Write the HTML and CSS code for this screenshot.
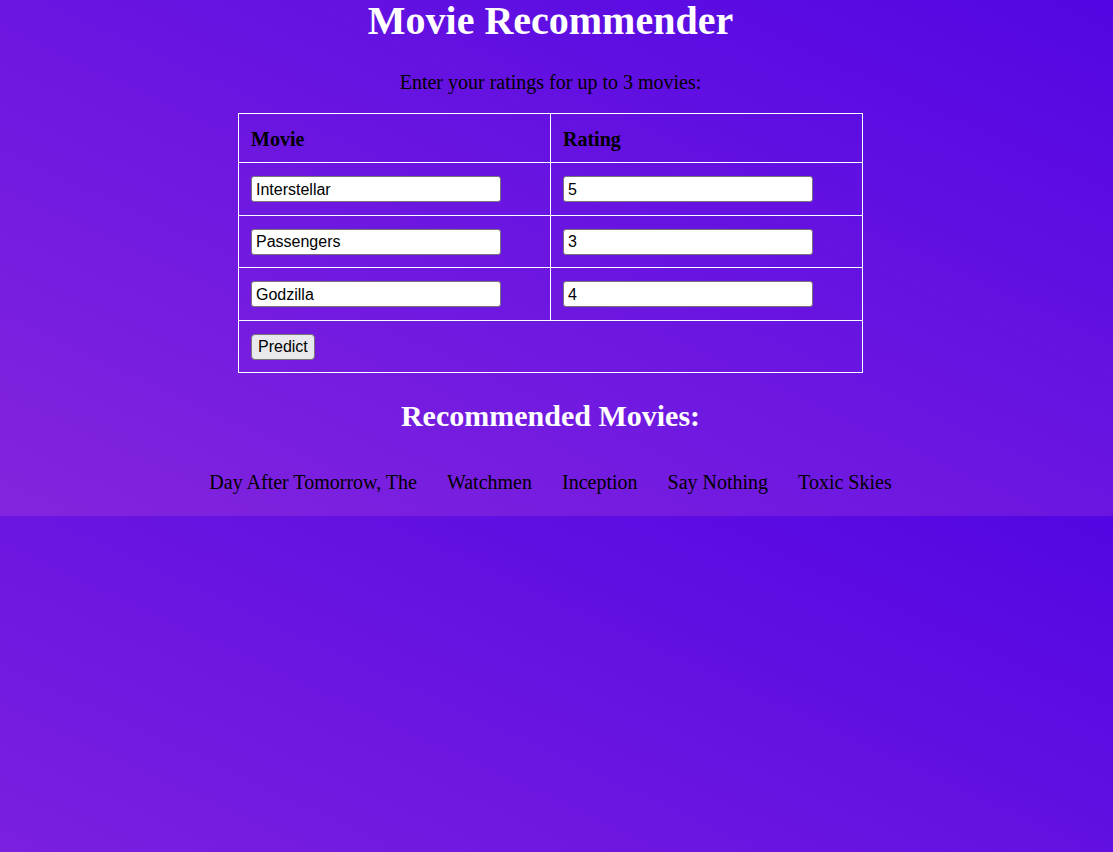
FILE: index.html
```html
<!DOCTYPE html>
<html>
<head>
<meta charset="utf-8">
<title>Movie Recommender</title>
<link rel="stylesheet" href="styles.css">
</head>
<body>
<div class="page">
  <h1 class="title">Movie Recommender</h1>
  <p class="intro">Enter your ratings for up to 3 movies:</p>
  <form class="rating-form">
    <table class="rating-table">
      <tr>
        <th>Movie</th>
        <th>Rating</th>
      </tr>
      <tr>
        <td><input class="field" type="text" value="Interstellar"></td>
        <td><input class="field" type="text" value="5"></td>
      </tr>
      <tr>
        <td><input class="field" type="text" value="Passengers"></td>
        <td><input class="field" type="text" value="3"></td>
      </tr>
      <tr>
        <td><input class="field" type="text" value="Godzilla"></td>
        <td><input class="field" type="text" value="4"></td>
      </tr>
      <tr>
        <td colspan="2"><button class="predict" type="button">Predict</button></td>
      </tr>
    </table>
  </form>
  <h2 class="subtitle">Recommended Movies:</h2>
  <ul class="recs">
    <li>Day After Tomorrow, The</li>
    <li>Watchmen</li>
    <li>Inception</li>
    <li>Say Nothing</li>
    <li>Toxic Skies</li>
  </ul>
</div>
</body>
</html>
```

FILE: styles.css
```css
html {
  margin: 0;
}
body {
  margin: 0;
  padding: 0 12px 0 0;
  font-family: "Liberation Serif", "Times New Roman", serif;
  font-size: 20px;
  color: #000;
  background: linear-gradient(to top right, #8325de, #5306e3);
}
.page {
  text-align: center;
  padding-bottom: 22px;
}
.title {
  margin: 0 0 29px;
  font-size: 40px;
  line-height: 42px;
  font-weight: bold;
  color: #fff;
}
.intro {
  margin: 0 0 19px;
  line-height: 23px;
}
.rating-form {
  margin: 0;
}
.rating-table {
  margin: 0 auto;
  width: 625px;
  border-collapse: collapse;
  text-align: left;
}
.rating-table th,
.rating-table td {
  border: 1px solid #fff;
  padding: 13px 12px 12.5px;
  width: 50%;
  line-height: 26px;
}
.rating-table th {
  padding: 14px 12px 11px;
  line-height: 23px;
  font-weight: bold;
}
.field {
  box-sizing: border-box;
  width: 250px;
  height: 26px;
  margin: 0;
  padding: 1px 4px 0;
  border: 1px solid #767676;
  border-radius: 3px;
  background: #fff;
  font-family: "Liberation Sans", Arial, sans-serif;
  font-size: 16px;
  color: #000;
  vertical-align: top;
}
.predict {
  box-sizing: border-box;
  height: 26px;
  margin: 0;
  padding: 0 6px;
  border: 1px solid #767676;
  border-radius: 4px;
  background: #e9e9ed;
  font-family: "Liberation Sans", Arial, sans-serif;
  font-size: 16px;
  color: #000;
  vertical-align: top;
}
.subtitle {
  margin: 25px 0 0;
  font-size: 30px;
  line-height: 35px;
  font-weight: bold;
  color: #fff;
}
.recs {
  list-style: none;
  margin: 38px 0 0;
  padding: 0;
  display: flex;
  justify-content: center;
  gap: 30px;
  line-height: 23px;
}
```
